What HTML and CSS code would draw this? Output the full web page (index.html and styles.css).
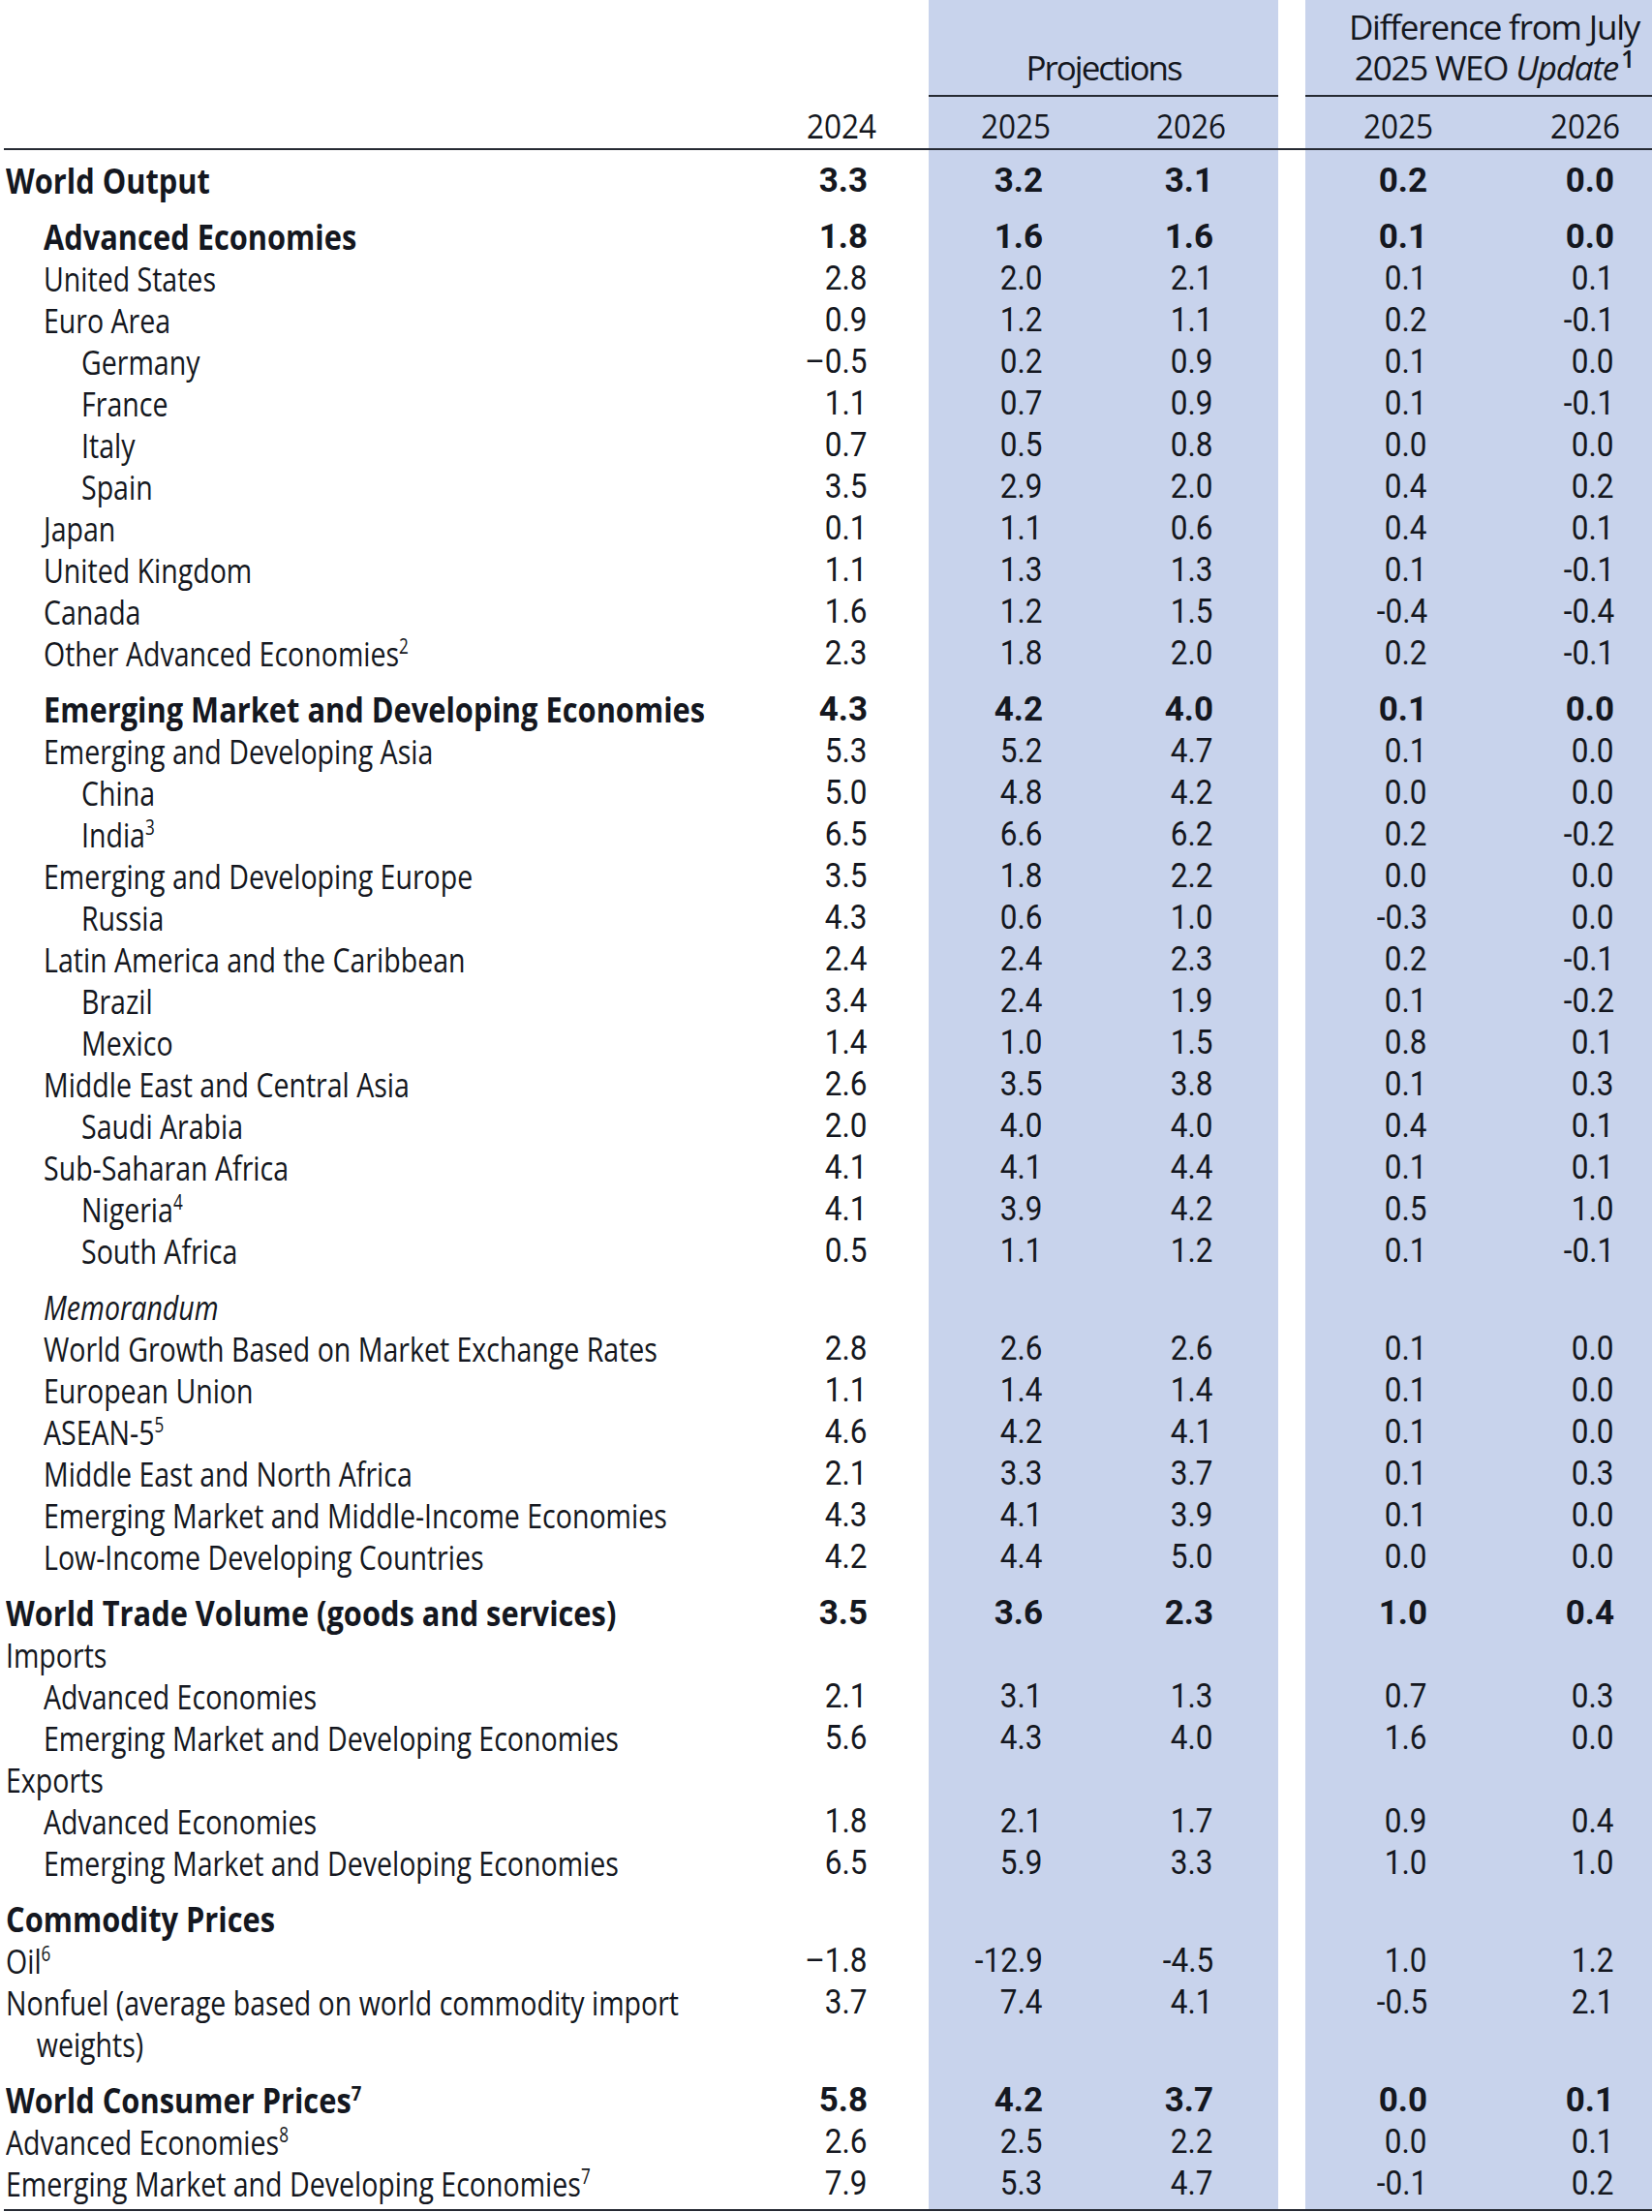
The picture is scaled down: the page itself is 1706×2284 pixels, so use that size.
FILE: index.html
```html
<!DOCTYPE html>
<html lang="en">
<head>
<meta charset="utf-8">
<title>World Economic Outlook Projections</title>
<link rel="stylesheet" href="styles.css">
</head>
<body>
<table class="weo">
  <colgroup>
    <col class="c-label">
    <col class="c-y24">
    <col class="c-p25 blue">
    <col class="c-p26 blue">
    <col class="c-gap">
    <col class="c-d25 blue">
    <col class="c-d26 blue">
  </colgroup>
  <thead>
    <tr class="h-group">
      <th class="h-empty"></th>
      <th class="h-empty"></th>
      <th class="h-proj" colspan="2"><span class="hl">Projections</span></th>
      <th class="h-empty"></th>
      <th class="h-diff" colspan="2"><span class="hl">Difference from July</span><span class="hl">2025 WEO <i>Update</i><span class="sup hsup">1</span></span></th>
    </tr>
    <tr class="h-years">
      <th class="h-blank"></th>
      <th class="hy hy24"><span class="hn">2024</span></th>
      <th class="hy hp25"><span class="hn">2025</span></th>
      <th class="hy hp26"><span class="hn">2026</span></th>
      <th class="h-blank"></th>
      <th class="hy hd25"><span class="hn">2025</span></th>
      <th class="hy hd26"><span class="hn">2026</span></th>
    </tr>
  </thead>
  <tbody>
    <tr class="bold first"><td class="l0"><span class="t">World Output</span></td><td><span class="n">3.3</span></td><td><span class="n">3.2</span></td><td><span class="n">3.1</span></td><td></td><td><span class="n">0.2</span></td><td><span class="n">0.0</span></td></tr>
    <tr class="bold gap"><td class="l1"><span class="t">Advanced Economies</span></td><td><span class="n">1.8</span></td><td><span class="n">1.6</span></td><td><span class="n">1.6</span></td><td></td><td><span class="n">0.1</span></td><td><span class="n">0.0</span></td></tr>
    <tr><td class="l1"><span class="t">United States</span></td><td><span class="n">2.8</span></td><td><span class="n">2.0</span></td><td><span class="n">2.1</span></td><td></td><td><span class="n">0.1</span></td><td><span class="n">0.1</span></td></tr>
    <tr><td class="l1"><span class="t">Euro Area</span></td><td><span class="n">0.9</span></td><td><span class="n">1.2</span></td><td><span class="n">1.1</span></td><td></td><td><span class="n">0.2</span></td><td><span class="n">-0.1</span></td></tr>
    <tr><td class="l2"><span class="t">Germany</span></td><td><span class="n">–0.5</span></td><td><span class="n">0.2</span></td><td><span class="n">0.9</span></td><td></td><td><span class="n">0.1</span></td><td><span class="n">0.0</span></td></tr>
    <tr><td class="l2"><span class="t">France</span></td><td><span class="n">1.1</span></td><td><span class="n">0.7</span></td><td><span class="n">0.9</span></td><td></td><td><span class="n">0.1</span></td><td><span class="n">-0.1</span></td></tr>
    <tr><td class="l2"><span class="t">Italy</span></td><td><span class="n">0.7</span></td><td><span class="n">0.5</span></td><td><span class="n">0.8</span></td><td></td><td><span class="n">0.0</span></td><td><span class="n">0.0</span></td></tr>
    <tr><td class="l2"><span class="t">Spain</span></td><td><span class="n">3.5</span></td><td><span class="n">2.9</span></td><td><span class="n">2.0</span></td><td></td><td><span class="n">0.4</span></td><td><span class="n">0.2</span></td></tr>
    <tr><td class="l1"><span class="t">Japan</span></td><td><span class="n">0.1</span></td><td><span class="n">1.1</span></td><td><span class="n">0.6</span></td><td></td><td><span class="n">0.4</span></td><td><span class="n">0.1</span></td></tr>
    <tr><td class="l1"><span class="t">United Kingdom</span></td><td><span class="n">1.1</span></td><td><span class="n">1.3</span></td><td><span class="n">1.3</span></td><td></td><td><span class="n">0.1</span></td><td><span class="n">-0.1</span></td></tr>
    <tr><td class="l1"><span class="t">Canada</span></td><td><span class="n">1.6</span></td><td><span class="n">1.2</span></td><td><span class="n">1.5</span></td><td></td><td><span class="n">-0.4</span></td><td><span class="n">-0.4</span></td></tr>
    <tr><td class="l1"><span class="t">Other Advanced Economies<span class="sup">2</span></span></td><td><span class="n">2.3</span></td><td><span class="n">1.8</span></td><td><span class="n">2.0</span></td><td></td><td><span class="n">0.2</span></td><td><span class="n">-0.1</span></td></tr>
    <tr class="bold gap"><td class="l1"><span class="t">Emerging Market and Developing Economies</span></td><td><span class="n">4.3</span></td><td><span class="n">4.2</span></td><td><span class="n">4.0</span></td><td></td><td><span class="n">0.1</span></td><td><span class="n">0.0</span></td></tr>
    <tr><td class="l1"><span class="t">Emerging and Developing Asia</span></td><td><span class="n">5.3</span></td><td><span class="n">5.2</span></td><td><span class="n">4.7</span></td><td></td><td><span class="n">0.1</span></td><td><span class="n">0.0</span></td></tr>
    <tr><td class="l2"><span class="t">China</span></td><td><span class="n">5.0</span></td><td><span class="n">4.8</span></td><td><span class="n">4.2</span></td><td></td><td><span class="n">0.0</span></td><td><span class="n">0.0</span></td></tr>
    <tr><td class="l2"><span class="t">India<span class="sup">3</span></span></td><td><span class="n">6.5</span></td><td><span class="n">6.6</span></td><td><span class="n">6.2</span></td><td></td><td><span class="n">0.2</span></td><td><span class="n">-0.2</span></td></tr>
    <tr><td class="l1"><span class="t">Emerging and Developing Europe</span></td><td><span class="n">3.5</span></td><td><span class="n">1.8</span></td><td><span class="n">2.2</span></td><td></td><td><span class="n">0.0</span></td><td><span class="n">0.0</span></td></tr>
    <tr><td class="l2"><span class="t">Russia</span></td><td><span class="n">4.3</span></td><td><span class="n">0.6</span></td><td><span class="n">1.0</span></td><td></td><td><span class="n">-0.3</span></td><td><span class="n">0.0</span></td></tr>
    <tr><td class="l1"><span class="t">Latin America and the Caribbean</span></td><td><span class="n">2.4</span></td><td><span class="n">2.4</span></td><td><span class="n">2.3</span></td><td></td><td><span class="n">0.2</span></td><td><span class="n">-0.1</span></td></tr>
    <tr><td class="l2"><span class="t">Brazil</span></td><td><span class="n">3.4</span></td><td><span class="n">2.4</span></td><td><span class="n">1.9</span></td><td></td><td><span class="n">0.1</span></td><td><span class="n">-0.2</span></td></tr>
    <tr><td class="l2"><span class="t">Mexico</span></td><td><span class="n">1.4</span></td><td><span class="n">1.0</span></td><td><span class="n">1.5</span></td><td></td><td><span class="n">0.8</span></td><td><span class="n">0.1</span></td></tr>
    <tr><td class="l1"><span class="t">Middle East and Central Asia</span></td><td><span class="n">2.6</span></td><td><span class="n">3.5</span></td><td><span class="n">3.8</span></td><td></td><td><span class="n">0.1</span></td><td><span class="n">0.3</span></td></tr>
    <tr><td class="l2"><span class="t">Saudi Arabia</span></td><td><span class="n">2.0</span></td><td><span class="n">4.0</span></td><td><span class="n">4.0</span></td><td></td><td><span class="n">0.4</span></td><td><span class="n">0.1</span></td></tr>
    <tr><td class="l1"><span class="t">Sub-Saharan Africa</span></td><td><span class="n">4.1</span></td><td><span class="n">4.1</span></td><td><span class="n">4.4</span></td><td></td><td><span class="n">0.1</span></td><td><span class="n">0.1</span></td></tr>
    <tr><td class="l2"><span class="t">Nigeria<span class="sup">4</span></span></td><td><span class="n">4.1</span></td><td><span class="n">3.9</span></td><td><span class="n">4.2</span></td><td></td><td><span class="n">0.5</span></td><td><span class="n">1.0</span></td></tr>
    <tr><td class="l2"><span class="t">South Africa</span></td><td><span class="n">0.5</span></td><td><span class="n">1.1</span></td><td><span class="n">1.2</span></td><td></td><td><span class="n">0.1</span></td><td><span class="n">-0.1</span></td></tr>
    <tr class="gap"><td class="l1"><span class="t memo">Memorandum</span></td><td></td><td></td><td></td><td></td><td></td><td></td></tr>
    <tr><td class="l1"><span class="t">World Growth Based on Market Exchange Rates</span></td><td><span class="n">2.8</span></td><td><span class="n">2.6</span></td><td><span class="n">2.6</span></td><td></td><td><span class="n">0.1</span></td><td><span class="n">0.0</span></td></tr>
    <tr><td class="l1"><span class="t">European Union</span></td><td><span class="n">1.1</span></td><td><span class="n">1.4</span></td><td><span class="n">1.4</span></td><td></td><td><span class="n">0.1</span></td><td><span class="n">0.0</span></td></tr>
    <tr><td class="l1"><span class="t">ASEAN-5<span class="sup">5</span></span></td><td><span class="n">4.6</span></td><td><span class="n">4.2</span></td><td><span class="n">4.1</span></td><td></td><td><span class="n">0.1</span></td><td><span class="n">0.0</span></td></tr>
    <tr><td class="l1"><span class="t">Middle East and North Africa</span></td><td><span class="n">2.1</span></td><td><span class="n">3.3</span></td><td><span class="n">3.7</span></td><td></td><td><span class="n">0.1</span></td><td><span class="n">0.3</span></td></tr>
    <tr><td class="l1"><span class="t">Emerging Market and Middle-Income Economies</span></td><td><span class="n">4.3</span></td><td><span class="n">4.1</span></td><td><span class="n">3.9</span></td><td></td><td><span class="n">0.1</span></td><td><span class="n">0.0</span></td></tr>
    <tr><td class="l1"><span class="t">Low-Income Developing Countries</span></td><td><span class="n">4.2</span></td><td><span class="n">4.4</span></td><td><span class="n">5.0</span></td><td></td><td><span class="n">0.0</span></td><td><span class="n">0.0</span></td></tr>
    <tr class="bold gap"><td class="l0"><span class="t">World Trade Volume (goods and services)</span></td><td><span class="n">3.5</span></td><td><span class="n">3.6</span></td><td><span class="n">2.3</span></td><td></td><td><span class="n">1.0</span></td><td><span class="n">0.4</span></td></tr>
    <tr><td class="l0"><span class="t">Imports</span></td><td></td><td></td><td></td><td></td><td></td><td></td></tr>
    <tr><td class="l1"><span class="t">Advanced Economies</span></td><td><span class="n">2.1</span></td><td><span class="n">3.1</span></td><td><span class="n">1.3</span></td><td></td><td><span class="n">0.7</span></td><td><span class="n">0.3</span></td></tr>
    <tr><td class="l1"><span class="t">Emerging Market and Developing Economies</span></td><td><span class="n">5.6</span></td><td><span class="n">4.3</span></td><td><span class="n">4.0</span></td><td></td><td><span class="n">1.6</span></td><td><span class="n">0.0</span></td></tr>
    <tr><td class="l0"><span class="t">Exports</span></td><td></td><td></td><td></td><td></td><td></td><td></td></tr>
    <tr><td class="l1"><span class="t">Advanced Economies</span></td><td><span class="n">1.8</span></td><td><span class="n">2.1</span></td><td><span class="n">1.7</span></td><td></td><td><span class="n">0.9</span></td><td><span class="n">0.4</span></td></tr>
    <tr><td class="l1"><span class="t">Emerging Market and Developing Economies</span></td><td><span class="n">6.5</span></td><td><span class="n">5.9</span></td><td><span class="n">3.3</span></td><td></td><td><span class="n">1.0</span></td><td><span class="n">1.0</span></td></tr>
    <tr class="bold gap"><td class="l0"><span class="t">Commodity Prices</span></td><td></td><td></td><td></td><td></td><td></td><td></td></tr>
    <tr><td class="l0"><span class="t">Oil<span class="sup">6</span></span></td><td><span class="n">–1.8</span></td><td><span class="n">-12.9</span></td><td><span class="n">-4.5</span></td><td></td><td><span class="n">1.0</span></td><td><span class="n">1.2</span></td></tr>
    <tr><td class="hang"><span class="t">Nonfuel (average based on world commodity import<br>weights)</span></td><td><span class="n">3.7</span></td><td><span class="n">7.4</span></td><td><span class="n">4.1</span></td><td></td><td><span class="n">-0.5</span></td><td><span class="n">2.1</span></td></tr>
    <tr class="bold gap"><td class="l0"><span class="t">World Consumer Prices<span class="sup">7</span></span></td><td><span class="n">5.8</span></td><td><span class="n">4.2</span></td><td><span class="n">3.7</span></td><td></td><td><span class="n">0.0</span></td><td><span class="n">0.1</span></td></tr>
    <tr><td class="l0"><span class="t">Advanced Economies<span class="sup">8</span></span></td><td><span class="n">2.6</span></td><td><span class="n">2.5</span></td><td><span class="n">2.2</span></td><td></td><td><span class="n">0.0</span></td><td><span class="n">0.1</span></td></tr>
    <tr class="last"><td class="l0"><span class="t">Emerging Market and Developing Economies<span class="sup">7</span></span></td><td><span class="n">7.9</span></td><td><span class="n">5.3</span></td><td><span class="n">4.7</span></td><td></td><td><span class="n">-0.1</span></td><td><span class="n">0.2</span></td></tr>
  </tbody>
</table>
</body>
</html>
```

FILE: styles.css
```css
* {
  box-sizing: border-box;
}

html,
body {
  margin: 0;
  padding: 0;
  background: #ffffff;
}

body {
  font-family: "Open Sans", "Noto Sans", sans-serif;
  font-size: 35px;
  color: #141720;
}

.weo {
  border-collapse: separate;
  border-spacing: 0;
  table-layout: fixed;
  width: 1702px;
  margin-left: 4px;
}

.c-label { width: 796px; }
.c-y24 { width: 159px; }
.c-p25 { width: 181px; }
.c-p26 { width: 180px; }
.c-gap { width: 28px; }
.c-d25 { width: 179px; }
.c-d26 { width: 179px; }

.blue {
  background: #c8d3ec;
}

.weo th {
  font-weight: normal;
  padding: 0;
  white-space: nowrap;
}

/* condensed text pieces */
.t,
.n,
.hn {
  display: inline-block;
  vertical-align: top;
}

.t {
  transform: scaleX(0.815);
  transform-origin: 0 50%;
}

.bold .t {
  transform: scaleX(0.88);
}

.n {
  font-family: Roboto, "Liberation Sans", sans-serif;
  transform: scaleX(0.9);
  transform-origin: 100% 50%;
}

.bold .n {
  transform: none;
}

.hn {
  font-weight: 500;
  transform: scaleX(0.9);
  transform-origin: 100% 50%;
}

/* header: group titles */
.h-group th {
  vertical-align: bottom;
  line-height: 42px;
  padding: 7px 0 7px 0;
  font-weight: 500;
}

.hl {
  display: block;
  height: 42px;
  line-height: 42px;
}

.h-proj,
.h-diff {
  text-align: center;
  border-bottom: 2px solid #262a33;
}

.weo th.h-proj {
  letter-spacing: -2px;
}

.weo th.h-diff {
  padding-left: 32px;
  letter-spacing: -1.2px;
}

/* header: years */
.h-years th {
  line-height: 43px;
  padding: 8px 0 2px 0;
  border-bottom: 2px solid #262a33;
}

.weo th.hy { text-align: right; }
.weo th.hy24 { padding-right: 54px; }
.weo th.hp25 { padding-right: 55px; }
.weo th.hp26 { padding-right: 54px; }
.weo th.hd25 { padding-right: 47px; }
.weo th.hd26 { padding-right: 33px; }

/* body */
.weo td {
  padding: 0;
  line-height: 43px;
  white-space: nowrap;
  text-align: right;
  vertical-align: top;
}

.weo td:nth-child(1) { text-align: left; }
.weo td:nth-child(2) { padding-right: 63px; }
.weo td:nth-child(3) { padding-right: 63px; }
.weo td:nth-child(4) { padding-right: 67px; }
.weo td:nth-child(6) { padding-right: 53px; }
.weo td:nth-child(7) { padding-right: 39px; }

.weo td.l0 { padding-left: 2px; }
.weo td.l1 { padding-left: 41px; }
.weo td.l2 { padding-left: 80px; }

.weo td.hang {
  padding-left: 2px;
}

.hang .t {
  padding-left: 39px;
  text-indent: -39px;
}

.weo tr.first td { padding-top: 10px; }
.weo tr.gap td { padding-top: 15px; }

.weo tr.last td {
  padding-bottom: 5px;
  border-bottom: 2px solid #262a33;
}

.bold td { font-weight: bold; }

.memo { font-style: italic; }

.sup {
  font-size: 0.6em;
  vertical-align: 0.6em;
  line-height: 0;
  font-weight: normal;
}

.bold .sup { font-weight: bold; }

.hsup {
  font-size: 0.72em;
  vertical-align: 0.5em;
  font-weight: 600;
  padding-left: 3px;
}
```
